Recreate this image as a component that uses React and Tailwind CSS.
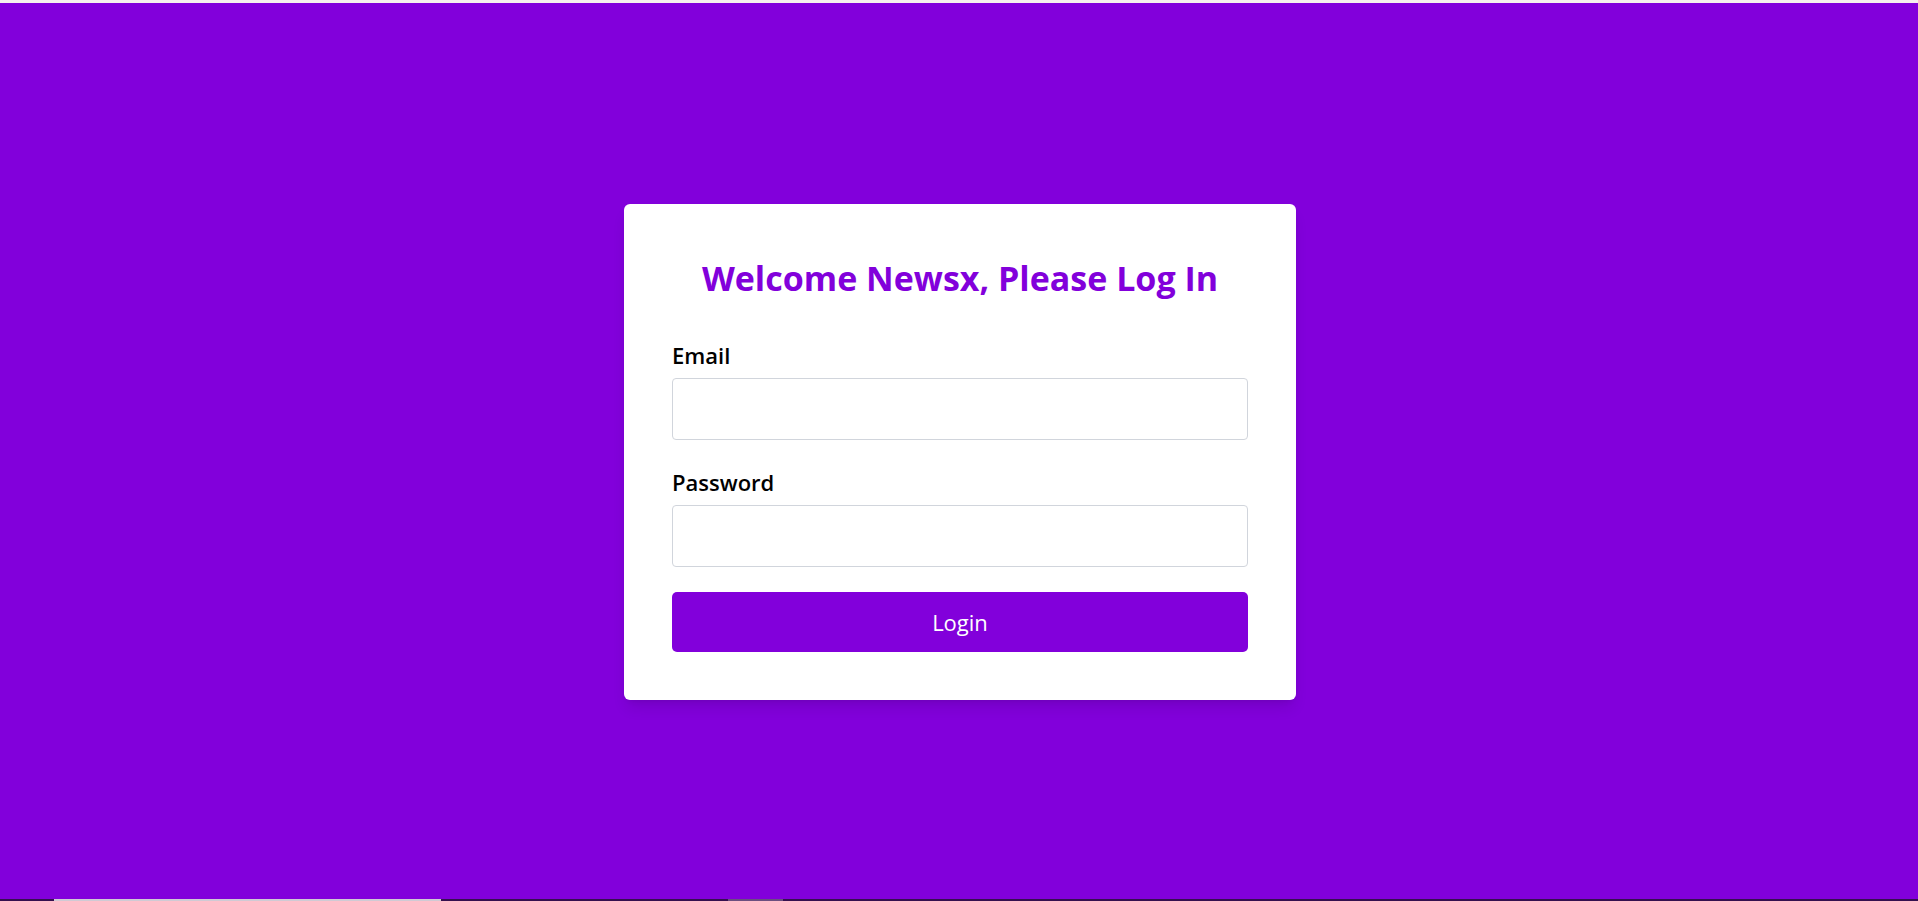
import React from 'react'

const App = () => {
  return (
    <div className="h-screen flex flex-col bg-[#8200db] font-['Open_Sans',sans-serif]">
      <div className="h-[3px] bg-[#f6f0ee]"></div>

      <div className="flex-1 flex items-center justify-center">
        <div className="w-[672px] ml-[2px] mt-[2px] p-12 bg-white rounded-md shadow-lg">
          <h1 className="text-center text-[34px] leading-[52px] font-bold text-[#8200db] mb-[37px]">
            Welcome Newsx, Please Log In
          </h1>
          <form onSubmit={(e) => e.preventDefault()}>
            <div className="mb-[28px]">
              <label className="block text-[22px] leading-[28px] font-semibold text-black mb-[9px]">Email</label>
              <input type="email" className="block w-full h-[62px] border border-gray-300 rounded px-3 outline-none" />
            </div>
            <div>
              <label className="block text-[22px] leading-[28px] font-semibold text-black mb-[9px]">Password</label>
              <input type="password" className="block w-full h-[62px] border border-gray-300 rounded px-3 outline-none" />
            </div>
            <button type="submit" className="mt-[25px] w-full h-[60px] bg-[#8200db] text-white text-[22px] rounded-[5px]">
              Login
            </button>
          </form>
        </div>
      </div>

      <div className="h-[2px] flex bg-[#35104f]">
        <div className="w-[54px]"></div>
        <div className="w-[387px] bg-[#d0cad4]"></div>
        <div className="w-[287px]"></div>
        <div className="w-[55px] bg-[#6b4f80]"></div>
      </div>
    </div>
  )
}

export default App
